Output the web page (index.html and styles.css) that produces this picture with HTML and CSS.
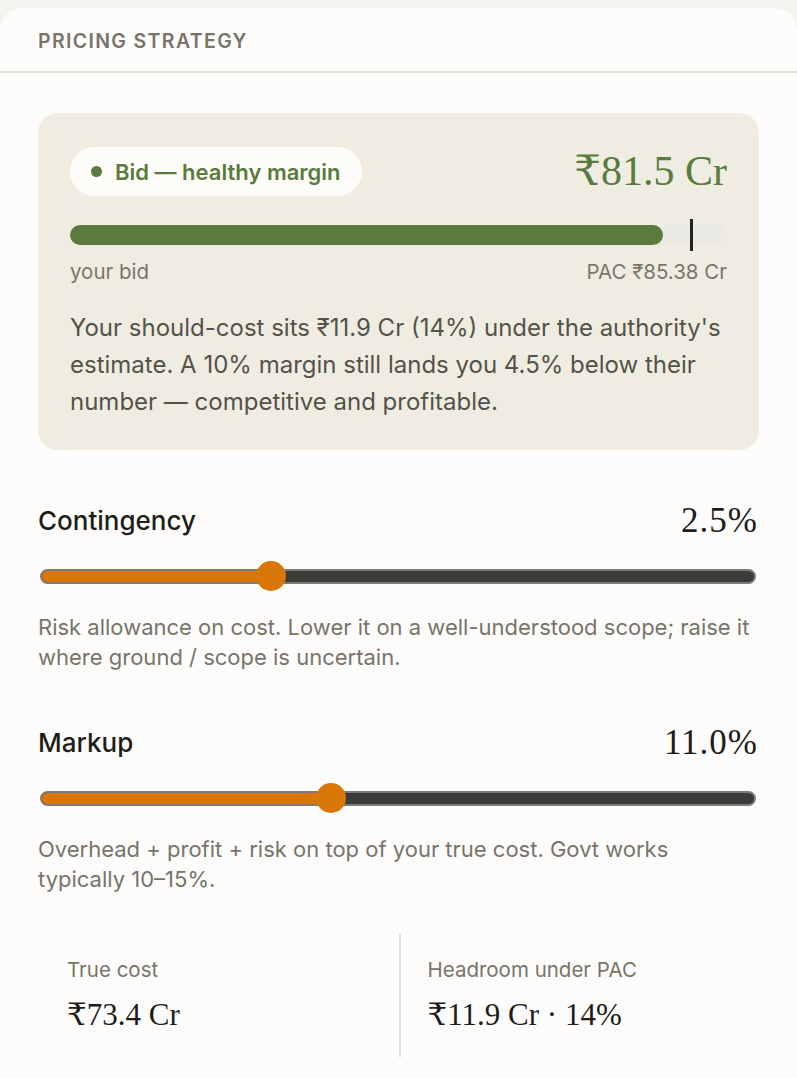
FILE: index.html
```html
<!DOCTYPE html>
<html>
<head>
<meta charset="utf-8">
<link rel="stylesheet" href="styles.css">
</head>
<body>
<div class="card">
  <div class="card-head">PRICING STRATEGY</div>
  <div class="card-body">
    <div class="verdict">
      <div class="verdict-top">
        <div class="pill"><span class="dot"></span>Bid — healthy margin</div>
        <div class="bid-value">₹81.5 Cr</div>
      </div>
      <div class="bar">
        <div class="bar-fill" style="width: 90.2%"></div>
        <div class="bar-mark" style="left: 94.4%"></div>
      </div>
      <div class="bar-labels"><span>your bid</span><span>PAC ₹85.38 Cr</span></div>
      <p class="verdict-text">Your should-cost sits ₹11.9 Cr (14%) under the authority's estimate. A 10% margin still lands you 4.5% below their number — competitive and profitable.</p>
    </div>

    <div class="control">
      <div class="control-head"><span class="control-label">Contingency</span><span class="control-value">2.5%</span></div>
      <div class="slider">
        <div class="track"><div class="track-fill" style="width: 32.2%"></div></div>
        <div class="thumb" style="left: 32.2%"></div>
      </div>
      <p class="control-desc">Risk allowance on cost. Lower it on a well-understood scope; raise it where ground / scope is uncertain.</p>
    </div>

    <div class="control">
      <div class="control-head"><span class="control-label">Markup</span><span class="control-value">11.0%</span></div>
      <div class="slider">
        <div class="track"><div class="track-fill" style="width: 40.6%"></div></div>
        <div class="thumb" style="left: 40.6%"></div>
      </div>
      <p class="control-desc">Overhead + profit + risk on top of your true cost. Govt works typically 10–15%.</p>
    </div>

    <div class="stats">
      <div class="stat">
        <div class="stat-label">True cost</div>
        <div class="stat-value">₹73.4 Cr</div>
      </div>
      <div class="stat">
        <div class="stat-label">Headroom under PAC</div>
        <div class="stat-value">₹11.9 Cr · 14%</div>
      </div>
    </div>
  </div>
</div>
</body>
</html>
```

FILE: styles.css
```css
* { box-sizing: border-box; }
html, body { margin: 0; padding: 0; }
body {
  background: #f4f3ee;
  padding-top: 8px;
  font-family: Inter, "Noto Sans", sans-serif;
  color: #1f1d1a;
}
.card {
  background: #fdfcfa;
  border-radius: 22px 22px 0 0;
  width: 797px;
  min-height: 1070px;
}
.card-head {
  height: 65px;
  padding: 21px 38px 0;
  font-size: 19.5px;
  line-height: 24px;
  font-weight: 600;
  letter-spacing: 1.35px;
  color: #77746a;
  border-bottom: 2px solid #e4e2dd;
}
.card-body {
  padding: 40px 38px 0 38px;
}
.verdict {
  background: #efede2;
  border-radius: 20px;
  padding: 34px 32px 30px;
}
.verdict-top {
  display: flex;
  justify-content: space-between;
  align-items: center;
}
.pill {
  display: flex;
  align-items: center;
  gap: 13px;
  background: #fdfcf9;
  border-radius: 25px;
  height: 49px;
  padding: 0 21px 0 21px;
  font-size: 22px;
  font-weight: 600;
  color: #5a7a3e;
}
.dot {
  width: 11px;
  height: 11px;
  border-radius: 50%;
  background: #5a7a3e;
}
.bid-value {
  font-family: "Liberation Serif", "DejaVu Serif", serif;
  font-size: 42px;
  line-height: 49px;
  color: #5a7a3e;
}
.bar {
  position: relative;
  margin-top: 29px;
  height: 20px;
  border-radius: 10px;
  background: #ebe9e4;
}
.bar-fill {
  height: 100%;
  border-radius: 10px;
  background: #5a7a3e;
}
.bar-mark {
  position: absolute;
  top: -6px;
  width: 3px;
  height: 32px;
  background: #26221d;
}
.bar-labels {
  display: flex;
  justify-content: space-between;
  margin-top: 14px;
  font-size: 20.5px;
  line-height: 25px;
  color: #7a766a;
}
.verdict-text {
  margin: 25px 0 0;
  font-size: 24px;
  line-height: 37px;
  color: #55524a;
}
.control {
  margin-top: 55px;
}
.control-head {
  display: flex;
  justify-content: space-between;
  align-items: center;
  height: 32px;
  padding-right: 1px;
}
.control-label {
  font-size: 26px;
  line-height: 32px;
  font-weight: 500;
  color: #1f1d1a;
}
.control-value {
  font-family: "Liberation Serif", "DejaVu Serif", serif;
  font-size: 35px;
  line-height: 32px;
  letter-spacing: 1px;
  color: #1f1d1a;
}
.slider {
  position: relative;
  height: 30px;
  margin: 24px 3px 0 2px;
  display: flex;
  align-items: center;
}
.track {
  width: 100%;
  height: 15px;
  border: 2px solid #7d7b77;
  border-radius: 8px;
  background: #3b3b3a;
  overflow: hidden;
}
.track-fill {
  height: 100%;
  background: #d97706;
}
.thumb {
  position: absolute;
  top: 0;
  width: 30px;
  height: 30px;
  margin-left: -15px;
  border-radius: 50%;
  background: #d97706;
}
.control-desc {
  margin: 21px 0 0;
  font-size: 22px;
  line-height: 30px;
  color: #77746a;
}
.stats {
  display: grid;
  grid-template-columns: 1fr 1fr;
  margin-top: 40px;
}
.stat {
  padding: 23px 29px 24px;
}
.stat + .stat {
  border-left: 2px solid #e0ded8;
  padding-left: 27px;
}
.stat-label {
  font-size: 20.5px;
  line-height: 25px;
  color: #77746a;
}
.stat-value {
  margin-top: 15px;
  font-family: "Liberation Serif", "DejaVu Serif", serif;
  font-size: 31px;
  line-height: 36px;
  color: #1f1d1a;
}
```
